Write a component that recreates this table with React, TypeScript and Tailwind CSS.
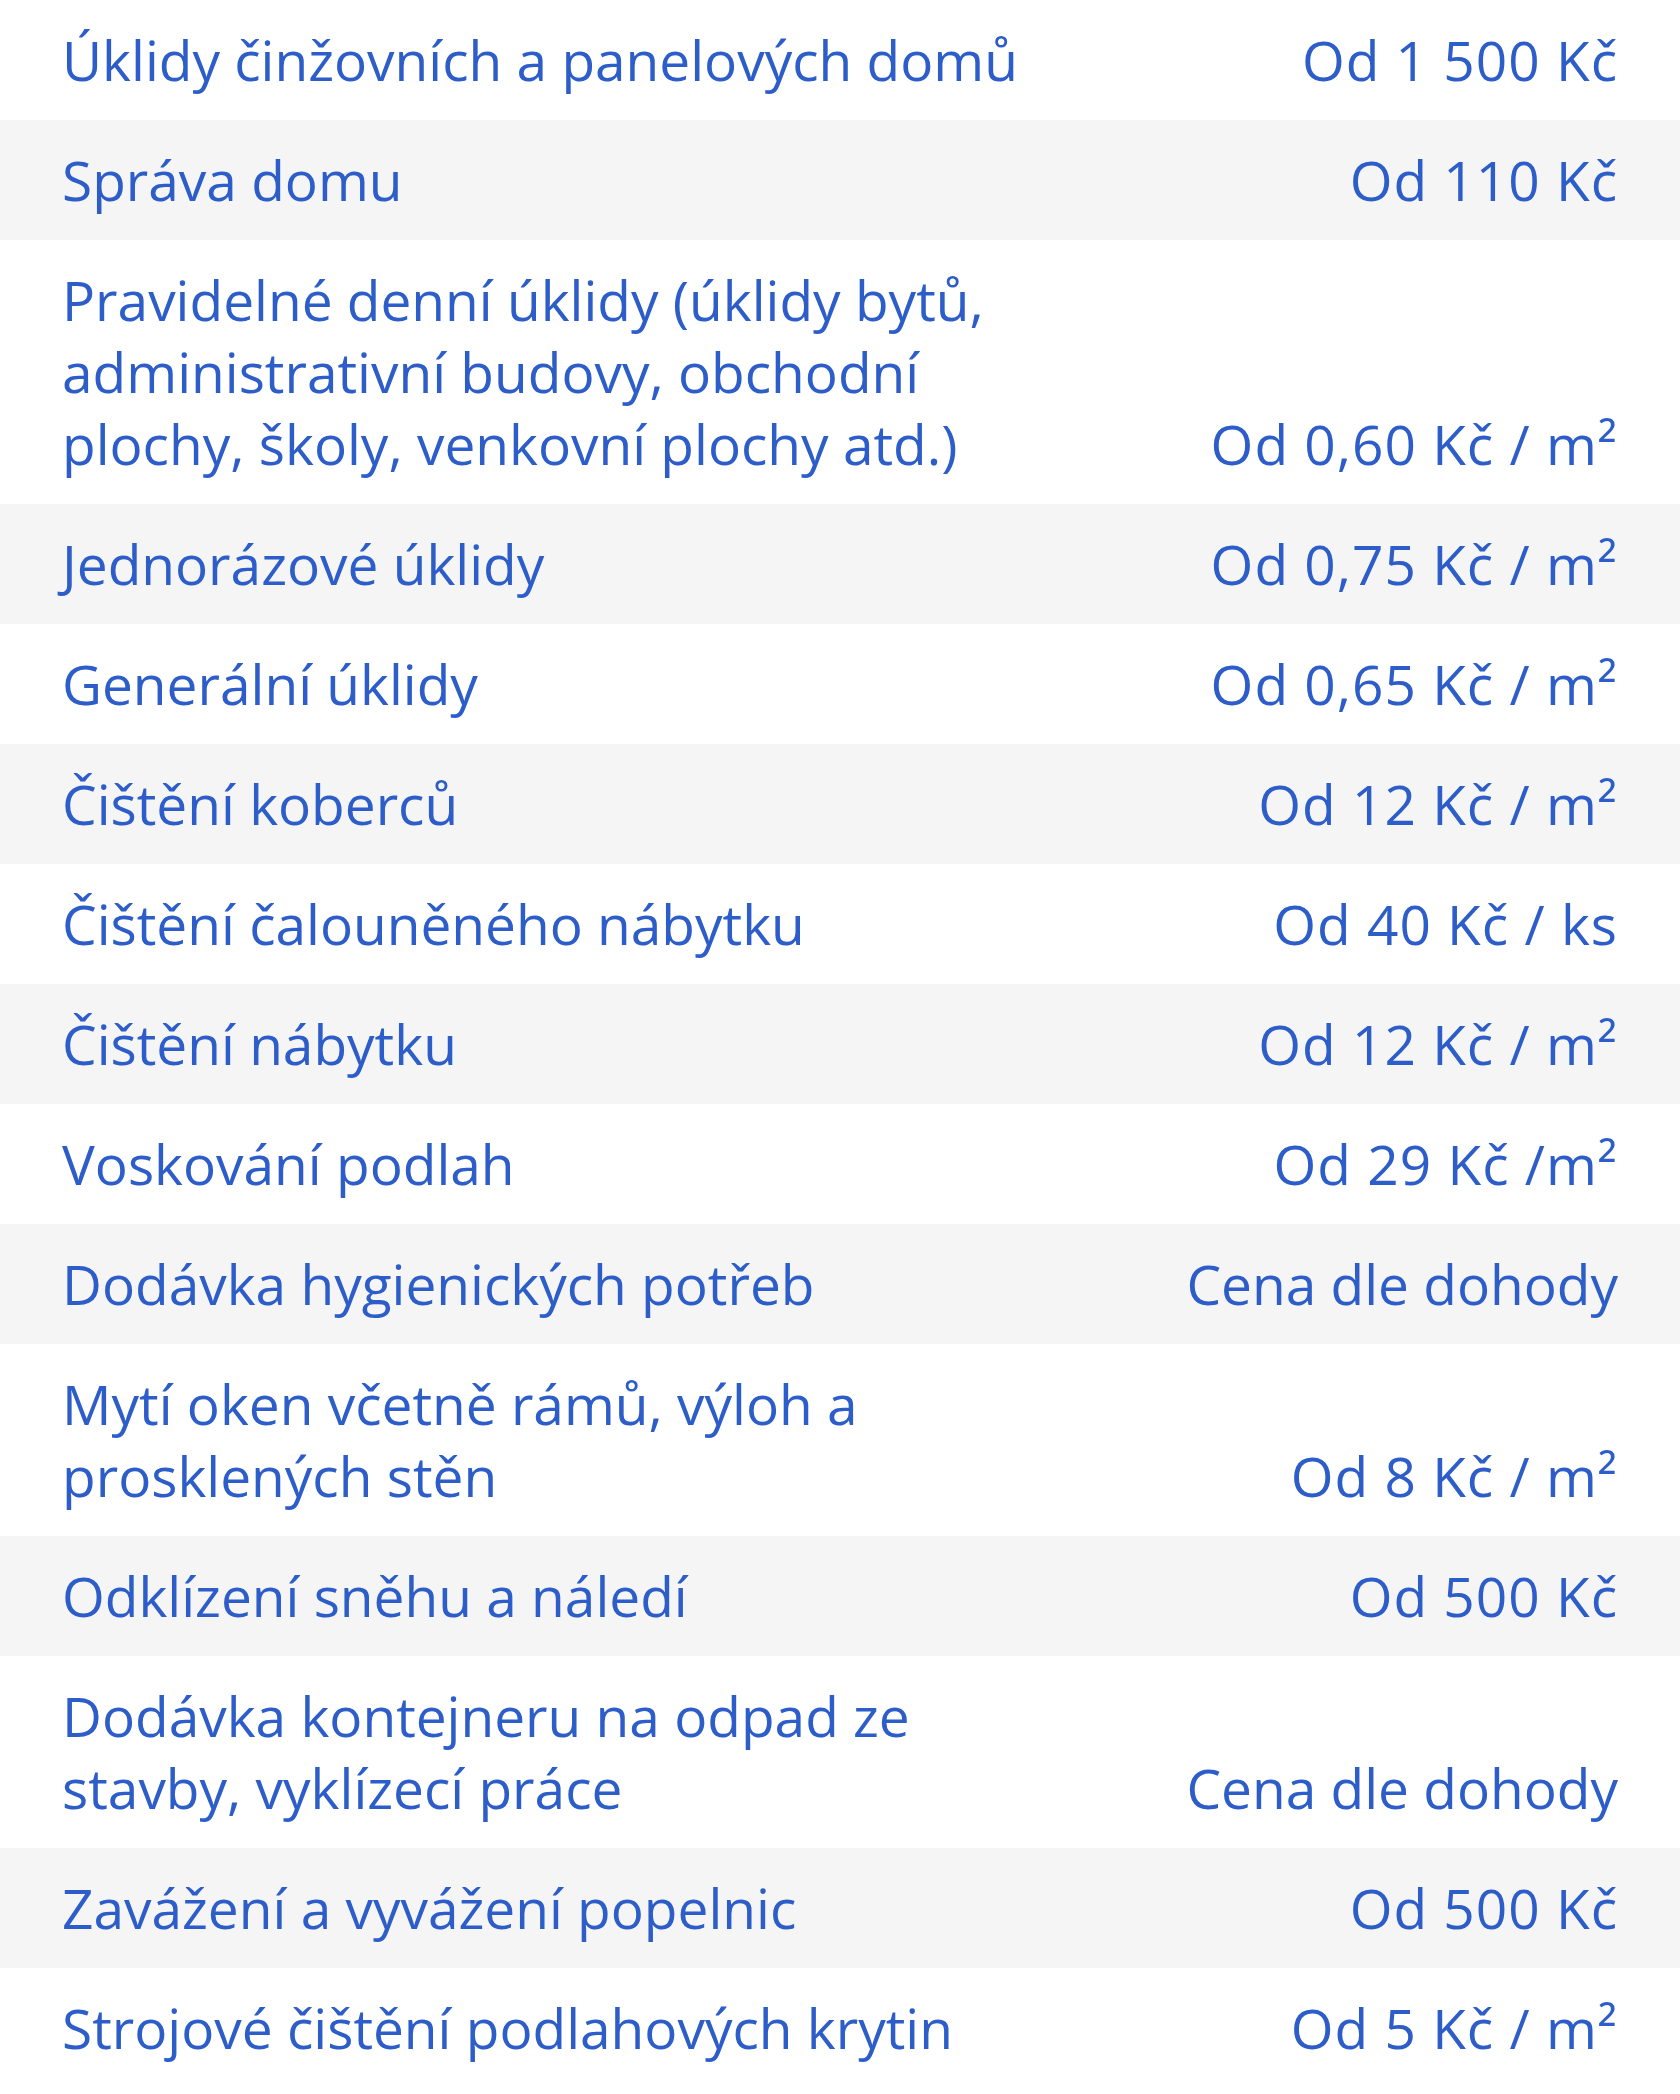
const rows: { name: string[]; price: string }[] = [
  { name: ['Úklidy činžovních a panelových domů'], price: 'Od 1 500 Kč' },
  { name: ['Správa domu'], price: 'Od 110 Kč' },
  {
    name: ['Pravidelné denní úklidy (úklidy bytů,', 'administrativní budovy, obchodní', 'plochy, školy, venkovní plochy atd.)'],
    price: 'Od 0,60 Kč / m²',
  },
  { name: ['Jednorázové úklidy'], price: 'Od 0,75 Kč / m²' },
  { name: ['Generální úklidy'], price: 'Od 0,65 Kč / m²' },
  { name: ['Čištění koberců'], price: 'Od 12 Kč / m²' },
  { name: ['Čištění čalouněného nábytku'], price: 'Od 40 Kč / ks' },
  { name: ['Čištění nábytku'], price: 'Od 12 Kč / m²' },
  { name: ['Voskování podlah'], price: 'Od 29 Kč /m²' },
  { name: ['Dodávka hygienických potřeb'], price: 'Cena dle dohody' },
  { name: ['Mytí oken včetně rámů, výloh a', 'prosklených stěn'], price: 'Od 8 Kč / m²' },
  { name: ['Odklízení sněhu a náledí'], price: 'Od 500 Kč' },
  { name: ['Dodávka kontejneru na odpad ze', 'stavby, vyklízecí práce'], price: 'Cena dle dohody' },
  { name: ['Zavážení a vyvážení popelnic'], price: 'Od 500 Kč' },
  { name: ['Strojové čištění podlahových krytin'], price: 'Od 5 Kč / m²' },
];

export default function App() {
  return (
    <div className="min-h-[2094px] bg-white font-['Open_Sans',sans-serif] text-[55px] leading-[72px] text-[#2d5dc8]">
      {rows.map((row, i) => (
        <div
          key={i}
          className={`flex items-end justify-between px-[62px] py-[24px] ${i % 2 === 1 ? 'bg-[#f5f5f5]' : 'bg-white'}`}
        >
          <div>
            {row.name.map((line, j) => (
              <div key={j} className="whitespace-nowrap">
                {line}
              </div>
            ))}
          </div>
          <div
            className={`whitespace-nowrap text-right ${row.price.startsWith('Od') ? 'tracking-[1px]' : ''}`}
          >
            {row.price}
          </div>
        </div>
      ))}
    </div>
  );
}
